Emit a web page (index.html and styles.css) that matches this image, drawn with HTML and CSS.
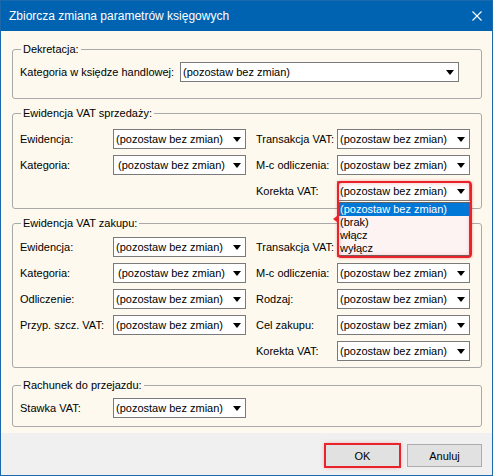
FILE: index.html
```html
<!DOCTYPE html>
<html lang="pl">
<head>
<meta charset="utf-8">
<title>Zbiorcza zmiana parametrów księgowych</title>
<link rel="stylesheet" href="styles.css">
</head>
<body>
<div class="window">
  <div class="titlebar">
    <span class="title">Zbiorcza zmiana parametrów księgowych</span>
    <svg class="close" width="10" height="10" viewBox="0 0 10 10"><path d="M0.5 0.5 L9.5 9.5 M9.5 0.5 L0.5 9.5" stroke="#fff" stroke-width="1.1" fill="none"/></svg>
  </div>
  <div class="client">
    <fieldset class="group g1">
      <legend>Dekretacja:</legend>
      <div class="row-wide">
        <span class="lbl">Kategoria w księdze handlowej:</span>
        <div class="combo wide"><span>(pozostaw bez zmian)</span><i class="arrow"></i></div>
      </div>
    </fieldset>

    <fieldset class="group g2">
      <legend>Ewidencja VAT sprzedaży:</legend>
      <div class="grid">
        <span class="lbl">Ewidencja:</span>
        <div class="combo"><span>(pozostaw bez zmian)</span><i class="arrow"></i></div>
        <span class="lbl r">Transakcja VAT:</span>
        <div class="combo"><span>(pozostaw bez zmian)</span><i class="arrow"></i></div>

        <span class="lbl">Kategoria:</span>
        <div class="combo"><span class="shift">(pozostaw bez zmian)</span><i class="arrow"></i></div>
        <span class="lbl r">M-c odliczenia:</span>
        <div class="combo"><span>(pozostaw bez zmian)</span><i class="arrow"></i></div>

        <span class="lbl"></span>
        <span></span>
        <span class="lbl r">Korekta VAT:</span>
        <div class="combo open"><span>(pozostaw bez zmian)</span><i class="arrow"></i>
          <ul class="droplist">
            <li class="sel">(pozostaw bez zmian)</li>
            <li>(brak)</li>
            <li>włącz</li>
            <li>wyłącz</li>
          </ul>
          <div class="highlight"><i class="notch"></i></div>
        </div>
      </div>
    </fieldset>

    <fieldset class="group g3">
      <legend>Ewidencja VAT zakupu:</legend>
      <div class="grid">
        <span class="lbl">Ewidencja:</span>
        <div class="combo"><span>(pozostaw bez zmian)</span><i class="arrow"></i></div>
        <span class="lbl r">Transakcja VAT:</span>
        <div class="combo"><span>(pozostaw bez zmian)</span><i class="arrow"></i></div>

        <span class="lbl">Kategoria:</span>
        <div class="combo"><span class="shift">(pozostaw bez zmian)</span><i class="arrow"></i></div>
        <span class="lbl r">M-c odliczenia:</span>
        <div class="combo"><span>(pozostaw bez zmian)</span><i class="arrow"></i></div>

        <span class="lbl">Odliczenie:</span>
        <div class="combo"><span>(pozostaw bez zmian)</span><i class="arrow"></i></div>
        <span class="lbl r">Rodzaj:</span>
        <div class="combo"><span>(pozostaw bez zmian)</span><i class="arrow"></i></div>

        <span class="lbl">Przyp. szcz. VAT:</span>
        <div class="combo"><span>(pozostaw bez zmian)</span><i class="arrow"></i></div>
        <span class="lbl r">Cel zakupu:</span>
        <div class="combo"><span>(pozostaw bez zmian)</span><i class="arrow"></i></div>

        <span class="lbl"></span>
        <span></span>
        <span class="lbl r">Korekta VAT:</span>
        <div class="combo"><span>(pozostaw bez zmian)</span><i class="arrow"></i></div>
      </div>
    </fieldset>

    <fieldset class="group g4">
      <legend>Rachunek do przejazdu:</legend>
      <div class="grid">
        <span class="lbl">Stawka VAT:</span>
        <div class="combo"><span>(pozostaw bez zmian)</span><i class="arrow"></i></div>
      </div>
    </fieldset>
  </div>
  <div class="footer">
    <button class="btn ok" type="button">OK</button>
    <button class="btn" type="button">Anuluj</button>
  </div>
</div>
</body>
</html>
```

FILE: styles.css
```css
* { box-sizing: border-box; }

html, body {
  margin: 0;
  padding: 0;
  background: #ffffff;
}

body {
  font-family: "Liberation Sans", Arial, sans-serif;
  font-size: 11px;
  color: #000;
}

.window {
  width: 493px;
  height: 476px;
  border: 1px solid #1c68ad;
  display: flex;
  flex-direction: column;
  overflow: hidden;
}

.titlebar {
  height: 30px;
  flex: none;
  background: #0063b1;
  color: #fff;
  display: flex;
  align-items: center;
  justify-content: space-between;
  padding: 0 10px 0 8px;
}

.title {
  font-size: 12px;
  line-height: 14px;
}

.close { display: block; }

.client {
  height: 402px;
  flex: none;
  background: #fdf9ee;
  padding: 11px 10px 0 11px;
  display: flex;
  flex-direction: column;
}

.group {
  margin: 0;
  border: 1px solid #a9a9a9;
  border-radius: 3px;
  padding: 0 11px 0 7px;
  min-width: 0;
}

.group legend {
  height: 14px;
  line-height: 14px;
  padding: 0 2px;
  margin-left: 1px;
}

.g1 { padding-top: 6px; padding-bottom: 16px; }
.g2 { margin-top: 7px; padding-top: 9px; padding-bottom: 7px; }
.g3 { margin-top: 7px; padding-top: 7px; padding-bottom: 6px; }
.g4 { margin-top: 10px; padding-top: 6px; padding-bottom: 8px; }

.row-wide {
  display: grid;
  grid-template-columns: 160px 279px;
  align-items: center;
}

.grid {
  display: grid;
  grid-template-columns: 93px 133px 91px 133px;
  grid-auto-rows: 20px;
  row-gap: 6px;
  align-items: center;
}

.lbl {
  white-space: nowrap;
  line-height: 14px;
}

.lbl.r { padding-left: 10px; }

.combo {
  position: relative;
  height: 20px;
  background: #fff;
  border: 1px solid #7a7a7a;
  display: flex;
  align-items: center;
  justify-content: space-between;
  padding: 0 4px 0 2px;
  white-space: nowrap;
}

.combo .shift { padding-left: 2px; }

.arrow {
  width: 0;
  height: 0;
  border-left: 4.5px solid transparent;
  border-right: 4.5px solid transparent;
  border-top: 5px solid #000;
  margin-top: 1px;
}

.droplist {
  position: absolute;
  left: 0;
  top: 20px;
  width: 132px;
  margin: 0;
  padding: 0;
  list-style: none;
  background: #fdf3f3;
  border: 1px solid #646464;
  z-index: 2;
}

.droplist li {
  height: 13px;
  line-height: 13px;
  padding-left: 1px;
}

.droplist li.sel {
  background: #0078d7;
  color: #fff;
}

.highlight {
  position: absolute;
  left: -1px;
  top: -1px;
  width: 135px;
  height: 77px;
  border: 2px solid #e9232b;
  border-radius: 4px;
  box-shadow: 0 0 3px rgba(240, 40, 40, 0.45), inset 0 0 4px rgba(240, 40, 40, 0.35);
  z-index: 3;
  pointer-events: none;
}

.notch {
  position: absolute;
  left: -6px;
  top: 33px;
  width: 0;
  height: 0;
  border-top: 3px solid transparent;
  border-bottom: 3px solid transparent;
  border-right: 4px solid #e9232b;
}

.footer {
  flex: 1;
  background: #f0f0f0;
  display: flex;
  justify-content: flex-end;
  align-items: flex-start;
  gap: 7px;
  padding: 11px 10px 0 0;
}

.btn {
  width: 75px;
  height: 23px;
  font-family: "Liberation Sans", Arial, sans-serif;
  font-size: 11px;
  color: #000;
  background: #e1e1e1;
  border: 1px solid #adadad;
  padding: 0;
  margin: 0;
}

.btn.ok {
  outline: 2px solid #e9232b;
  outline-offset: -1px;
  box-shadow: 0 0 4px rgba(240, 40, 40, 0.5);
}
```
